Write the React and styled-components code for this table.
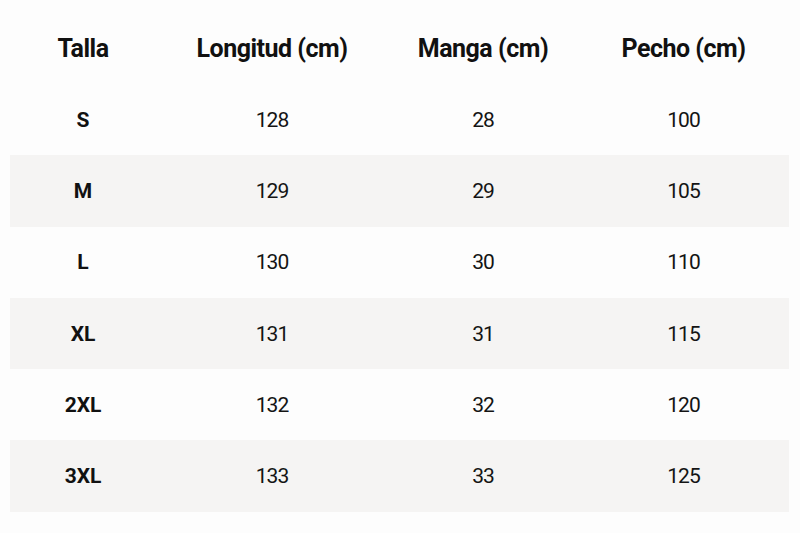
import styled, { createGlobalStyle } from 'styled-components';

const Global = createGlobalStyle`
    body {
        margin: 0;
        background: #fdfdfd;
        font-family: Roboto, "Noto Sans", sans-serif;
        color: #141414;
    }
`;

const filas = [
    ['S', 128, 28, 100],
    ['M', 129, 29, 105],
    ['L', 130, 30, 110],
    ['XL', 131, 31, 115],
    ['2XL', 132, 32, 120],
    ['3XL', 133, 33, 125],
];

function App() {
    return (
        <Pagina>
            <Global />
            <Tabla>
                <colgroup>
                    <col style={{ width: 146 }} />
                    <col style={{ width: 232 }} />
                    <col style={{ width: 190 }} />
                    <col style={{ width: 211 }} />
                </colgroup>
                <thead>
                    <tr>
                        <Encabezado>Talla</Encabezado>
                        <Encabezado>Longitud (cm)</Encabezado>
                        <Encabezado>Manga (cm)</Encabezado>
                        <Encabezado>Pecho (cm)</Encabezado>
                    </tr>
                </thead>
                <tbody>
                    {filas.map((fila, i) => (
                        <Fila key={fila[0]} $gris={i % 2 === 1}>
                            <Talla>{fila[0]}</Talla>
                            <Celda>{fila[1]}</Celda>
                            <Celda>{fila[2]}</Celda>
                            <Celda>{fila[3]}</Celda>
                        </Fila>
                    ))}
                </tbody>
            </Tabla>
        </Pagina>
    );
}

export default App;

const Pagina = styled.div`
    padding: 12px 11px 21px 10px;
`;

const Tabla = styled.table`
    width: 779px;
    border-collapse: collapse;
    table-layout: fixed;
`;

const Encabezado = styled.th`
    height: 72px;
    padding: 0;
    text-align: center;
    font-size: 25px;
    font-weight: 700;
    letter-spacing: -0.5px;
    color: #111;
`;

const Fila = styled.tr`
    background: ${(p) => (p.$gris ? '#f5f4f3' : 'transparent')};
`;

const Celda = styled.td`
    height: 71.3px;
    padding: 0;
    text-align: center;
    font-size: 21px;
    font-weight: 400;
    letter-spacing: -1px;
`;

const Talla = styled(Celda)`
    font-weight: 700;
    letter-spacing: 0;
    color: #111;
`;
